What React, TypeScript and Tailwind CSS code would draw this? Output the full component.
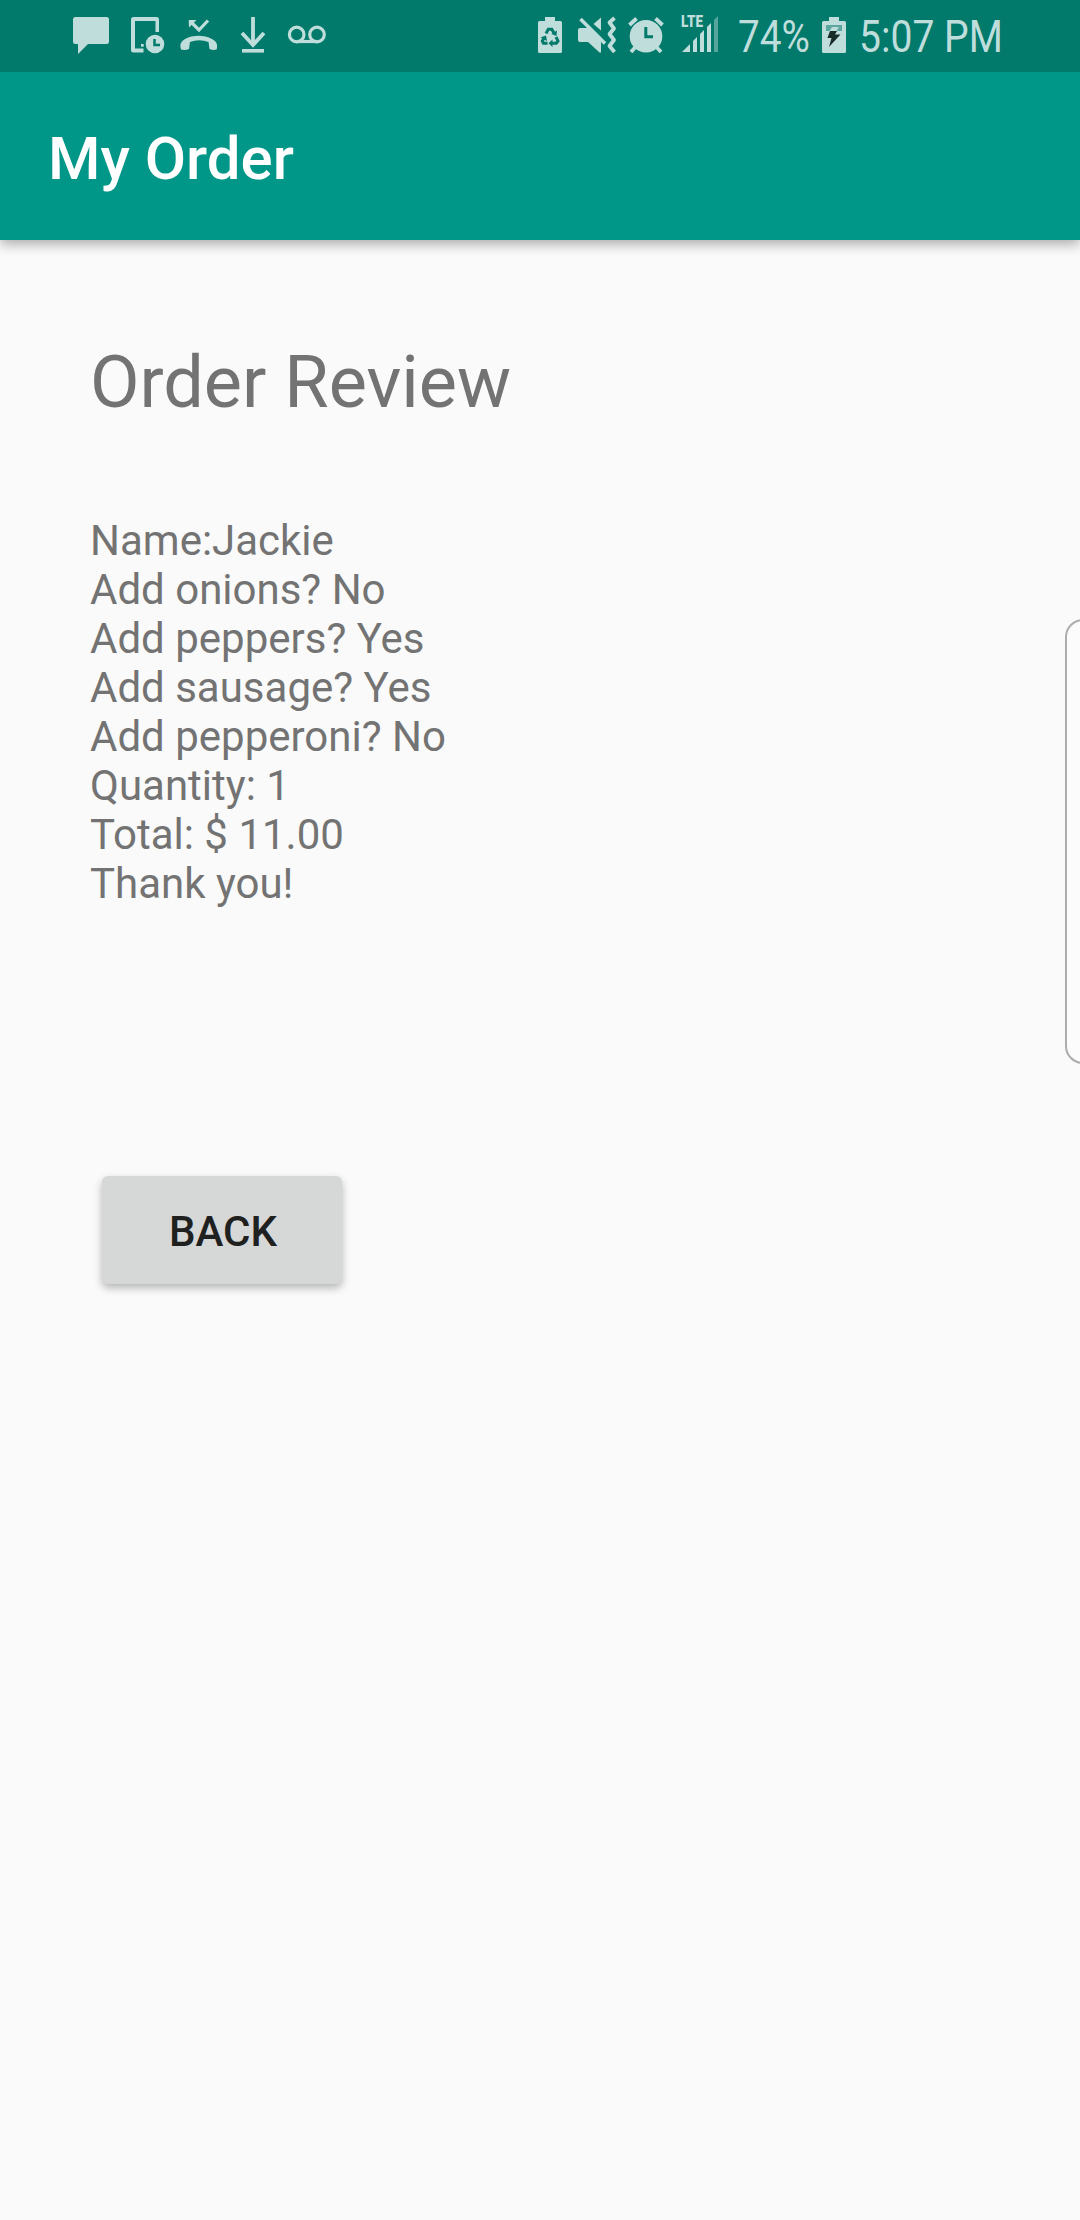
import type { ReactNode } from "react";

const TINT = "#bfdedb";
const BAR = "#01796b";

// Status icons share the bar's coordinate system; x and w select the slice each one covers.
function Icon({ x, w, className, children }: { x: number; w: number; className: string; children: ReactNode }) {
  return (
    <svg width={w} height={72} viewBox={`${x} 0 ${w} 72`} fill={TINT} className={`block shrink-0 overflow-visible ${className}`}>
      {children}
    </svg>
  );
}

function StatusBar() {
  return (
    <div className="relative z-10 flex h-[72px] w-full shrink-0 items-start bg-[#01796b] text-[44px] leading-[74px] text-[#bfdedb]">
      <Icon x={73} w={36} className="ml-[73px]">
        <path d="M75.500 17H106.500Q109 17 109 19.500V41.500Q109 44 106.500 44H88L78 54V44H75.500Q73 44 73 41.500V19.500Q73 17 75.500 17Z" />
      </Icon>
      <Icon x={131} w={34} className="ml-[22px]">
        <path d="M133.500 17H156.500Q159 17 159 19.500V32H155.500V21H135V48.500H143.500V52.500H133.500Q131 52.500 131 50V19.500Q131 17 133.500 17Z" />
        <rect x={141} y={44} width={2.700} height={2.700} />
        <circle cx={155} cy={44} r={9.300} />
        <path d="M154.500 39V45H160" fill="none" stroke={BAR} strokeWidth={2.500} />
      </Icon>
      <Icon x={180} w={38} className="ml-[15px]">
        <path d="M191 22L199 30L208 20.500" fill="none" stroke={TINT} strokeWidth={3.200} />
        <path d="M188.700 20H196.500L189 27.500Z" />
        <path d="M181 49.500C179.500 44 181 41.500 185 39C193 34.800 204 34.800 212 39C216.500 41.500 218 44 216.700 49.500Q213 50.500 209.500 49L208.500 42Q199 38.500 190 42L189 49Q185 50.500 181 49.500Z" />
      </Icon>
      <Icon x={241} w={25} className="ml-[23px]">
        <path d="M253 17V44M242 33L253 45L264 33" fill="none" stroke={TINT} strokeWidth={3.800} />
        <rect x={242} y={49} width={22} height={3.600} />
      </Icon>
      <Icon x={288} w={38} className="ml-[22px]">
        <g fill="none" stroke={TINT} strokeWidth={3.200}>
          <circle cx={296.700} cy={34.500} r={7.300} />
          <circle cx={317} cy={34.500} r={7.300} />
          <path d="M296.700 41.500H317" />
        </g>
      </Icon>

      <Icon x={538} w={24} className="ml-[212px]">
        <path d="M545 17H555V21H560.500Q562 21 562 22.500V51.500Q562 53 560.500 53H539.500Q538 53 538 51.500V22.500Q538 21 539.500 21H545Z" />
        <g fill="none" stroke={BAR} strokeWidth={3}>
          <path d="M546 33.500L548.300 29.300H551.800L554 33" />
          <path d="M556 37L558 41L556.300 43.300H551.500" />
          <path d="M547.500 43.300H543.500L542.300 41L544.500 37.300" />
        </g>
        <path d="M557 30.500L556.500 36L551.300 34ZM552.500 39.500V47L548.500 43.300ZM540.500 37.500L546 35.500L547 41Z" fill={BAR} />
      </Icon>
      <Icon x={578} w={39} className="ml-[16px]">
        <path d="M580 28H588L592.500 32L601 40V52.500H599.500L588 42H580Q578 42 578 40V30Q578 28 580 28Z" />
        <path d="M601 17.500V30.500L593.500 24Z" />
        <path d="M583 18L607 42" fill="none" stroke={BAR} strokeWidth={3} />
        <path d="M580.500 19L605 43.500" fill="none" stroke={TINT} strokeWidth={3.600} />
        <path d="M614.500 18L609.500 22.500L614 28.500L609.500 34L614 40L609.500 46L614.500 52" fill="none" stroke={TINT} strokeWidth={3.800} strokeLinejoin="round" />
      </Icon>
      <Icon x={630} w={33} className="ml-[13px]">
        <circle cx={646} cy={36.300} r={16.300} />
        <path d="M629.500 25L636.500 18.500M655.500 18.500L662.500 25M635.500 47L631 52M656.500 47L661 52" fill="none" stroke={TINT} strokeWidth={3.800} />
        <path d="M645.800 27V36.800H653" fill="none" stroke={BAR} strokeWidth={3} />
      </Icon>
      <div className="relative ml-[18px] w-[37px] shrink-0">
        <Icon x={681} w={37} className="">
          <path d="M682 52L690 44V52ZM693 41L697 37V52H693ZM700 34L704 30V52H700ZM707 27L711 23V52H707Z" />
          <path d="M714 20L718 16V52H714Z" opacity={0.45} />
        </Icon>
        <span className="absolute left-0 top-[13px] origin-left scale-x-[0.84] text-[16px] font-black leading-[18px]">LTE</span>
      </div>
      <span className="ml-[20px] block w-[84px] origin-left scale-x-[0.88]">74%</span>
      <Icon x={822} w={24} className="">
        <path d="M829 17H839V21H844.500Q846 21 846 22.500V51.500Q846 53 844.500 53H823.500Q822 53 822 51.500V22.500Q822 21 823.500 21H829Z" />
        <path d="M826 25H842V31H826Z" fill="#5ba69e" />
        <path d="M832 27H839L836.500 31H829.500Z" />
        <path d="M830 31H837L835 34.500H840.500L829 47L831.500 38H827.500Z" fill="#172b29" />
      </Icon>
      <span className="ml-[13px] block origin-left scale-x-[0.888] whitespace-nowrap">5:07 PM</span>
    </div>
  );
}

const lines = [
  "Name:Jackie",
  "Add onions? No",
  "Add peppers? Yes",
  "Add sausage? Yes",
  "Add pepperoni? No",
  "Quantity: 1",
  "Total: $ 11.00",
  "Thank you!",
];

export default function App() {
  return (
    <div className="relative flex h-[2220px] w-[1080px] flex-col overflow-hidden bg-[#fafafa] font-['Roboto',sans-serif] text-[#737373]">
      <StatusBar />
      <header className="flex h-[168px] shrink-0 items-center bg-[#009688] pl-12 pt-[5px] shadow-[0_4px_12px_rgba(0,0,0,0.33)]">
        <h1 className="text-[60px] font-medium leading-[70px] text-white">My Order</h1>
      </header>
      <main className="flex flex-col items-start pl-[90px] pt-[101px]">
        <h2 className="text-[72px] leading-[84px]">Order Review</h2>
        <div className="mt-[91px] text-[42px] leading-[49px]">
          {lines.map((line) => (
            <p key={line}>{line}</p>
          ))}
        </div>
        <button className="ml-[12px] mt-[268px] flex h-[108px] w-[240px] items-center justify-center rounded-[6px] bg-[#d6d7d7] pl-[2px] pt-[3px] text-[42px] font-medium leading-[49px] text-[#1f2020] shadow-[0_4px_8px_rgba(0,0,0,0.28)]">
          BACK
        </button>
      </main>
      <div className="absolute left-[1065px] top-[619px] h-[445px] w-[40px] rounded-[18px] border-2 border-[#acacac] bg-[#fcfcfc]" />
    </div>
  );
}
